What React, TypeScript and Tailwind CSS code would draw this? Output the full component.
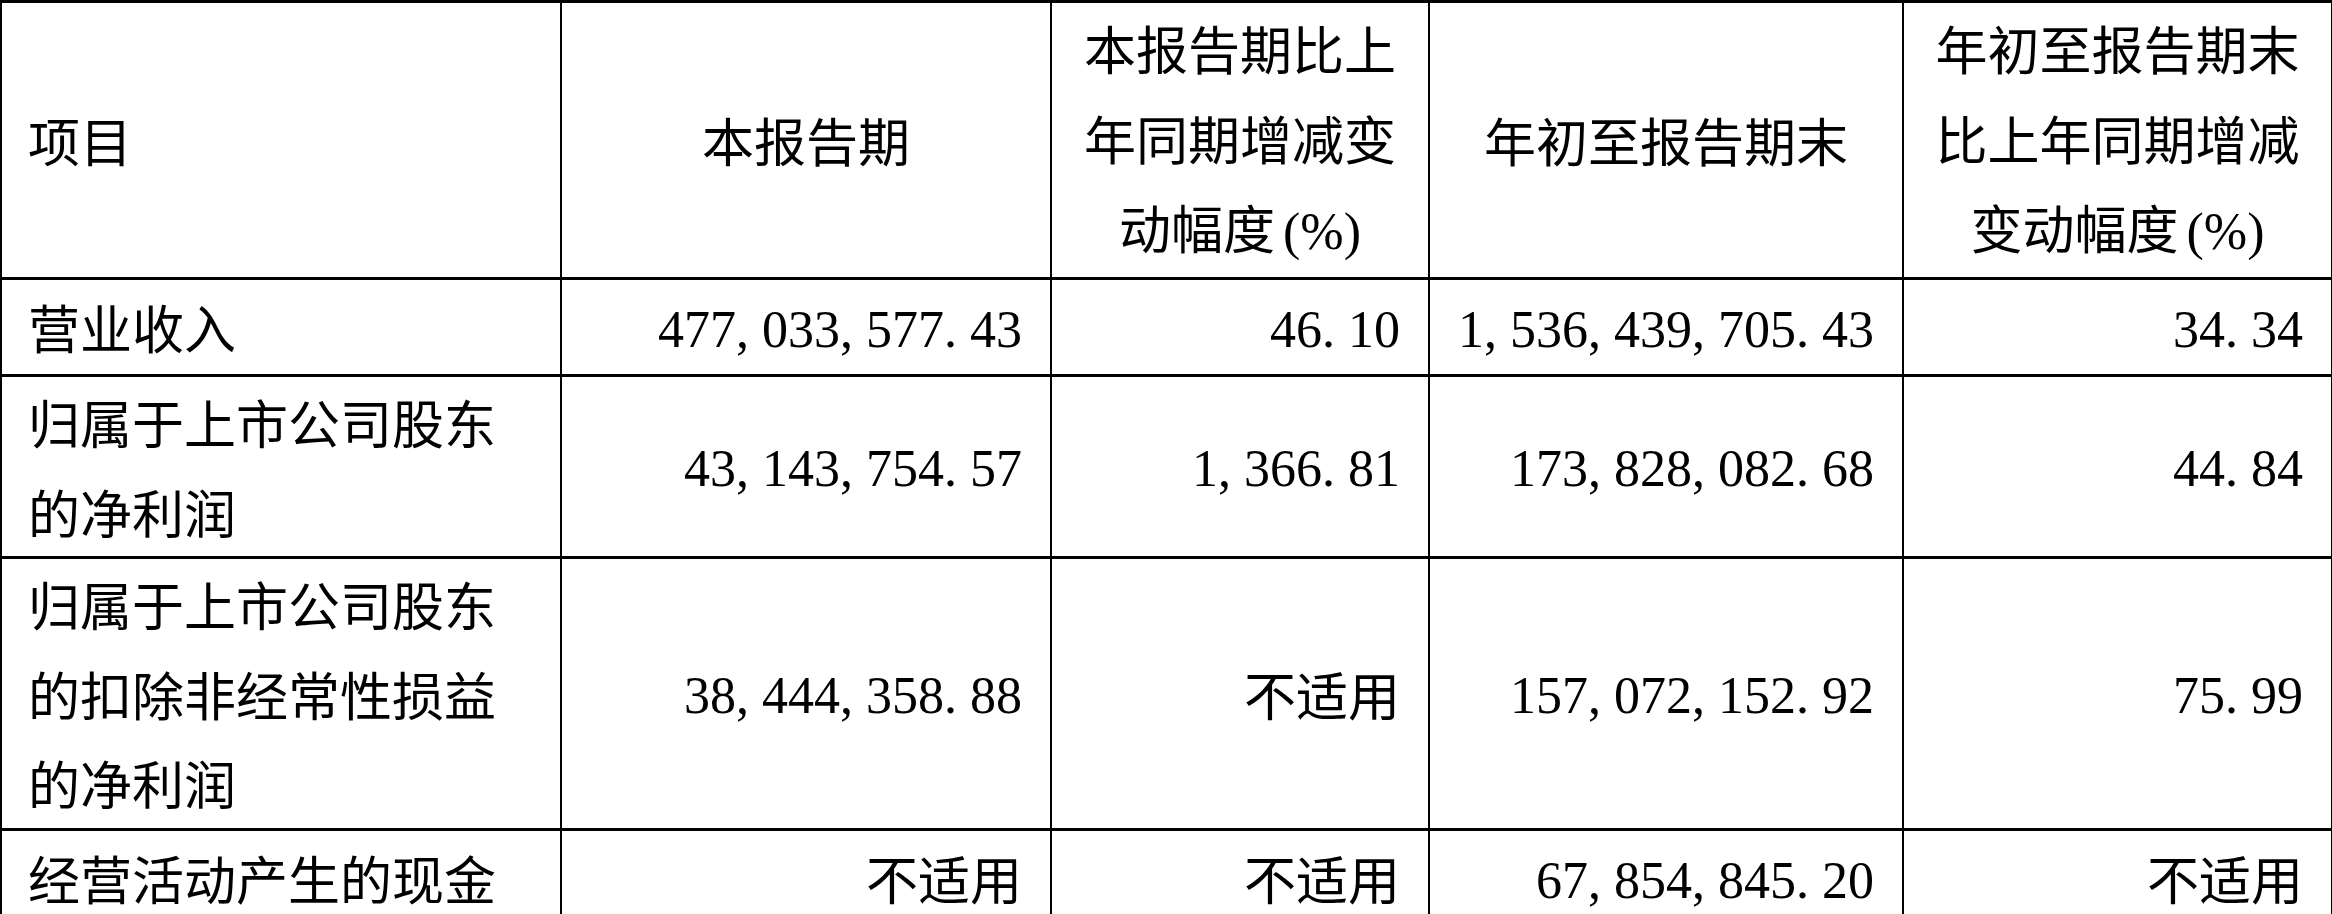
import React from 'react';

const rows: { label: string; values: string[] }[] = [
  { label: '营业收入', values: ['477,033,577.43', '46.10', '1,536,439,705.43', '34.34'] },
  { label: '归属于上市公司股东的净利润', values: ['43,143,754.57', '1,366.81', '173,828,082.68', '44.84'] },
  {
    label: '归属于上市公司股东的扣除非经常性损益的净利润',
    values: ['38,444,358.88', '不适用', '157,072,152.92', '75.99'],
  },
  { label: '经营活动产生的现金', values: ['不适用', '不适用', '67,854,845.20', '不适用'] },
];

// SimSun style half-width digits: punctuation takes a full half-em cell
function Num({ v }: { v: string }) {
  return (
    <span className="font-['Liberation_Serif',serif]">
      {v.split('').map((c, i) =>
        c === ',' || c === '.' ? (
          <span key={i} className="inline-block w-[0.5em] text-left">
            {c}
          </span>
        ) : (
          c
        )
      )}
    </span>
  );
}

function Value({ v }: { v: string }) {
  if (/^[\d,.]+$/.test(v)) return <Num v={v} />;
  return <>{v}</>;
}

function Pct() {
  return <span className="ml-2 inline-block font-['Liberation_Serif',serif]">(%)</span>;
}

const td = 'border-x-2 border-y-[3px] border-black align-middle';

export default function App() {
  return (
    <div className="h-[914px] w-[2332px] overflow-hidden bg-white font-['Noto_Sans_CJK_SC',sans-serif] text-[52px] leading-[89.5px] text-black">
      <table className="w-[2331px] table-fixed border-collapse">
        <colgroup>
          <col className="w-[560px]" />
          <col className="w-[490px]" />
          <col className="w-[378px]" />
          <col className="w-[474px]" />
          <col className="w-[429px]" />
        </colgroup>
        <thead>
          <tr>
            <th className={`${td} pl-[26px] text-left font-normal`}>项目</th>
            <th className={`${td} px-6 text-center font-normal`}>本报告期</th>
            <th className={`${td} px-6 text-center font-normal`}>
              本报告期比上年同期增减变动幅度
              <Pct />
            </th>
            <th className={`${td} px-6 text-center font-normal`}>年初至报告期末</th>
            <th className={`${td} px-6 text-center font-normal`}>
              年初至报告期末比上年同期增减变动幅度
              <Pct />
            </th>
          </tr>
        </thead>
        <tbody>
          {rows.map((r) => (
            <tr key={r.label}>
              <td className={`${td} pl-[26px] pr-6 text-left`}>{r.label}</td>
              {r.values.map((v, i) => (
                <td key={i} className={`${td} pl-4 pr-[28px] text-right`}>
                  <Value v={v} />
                </td>
              ))}
            </tr>
          ))}
        </tbody>
      </table>
    </div>
  );
}
